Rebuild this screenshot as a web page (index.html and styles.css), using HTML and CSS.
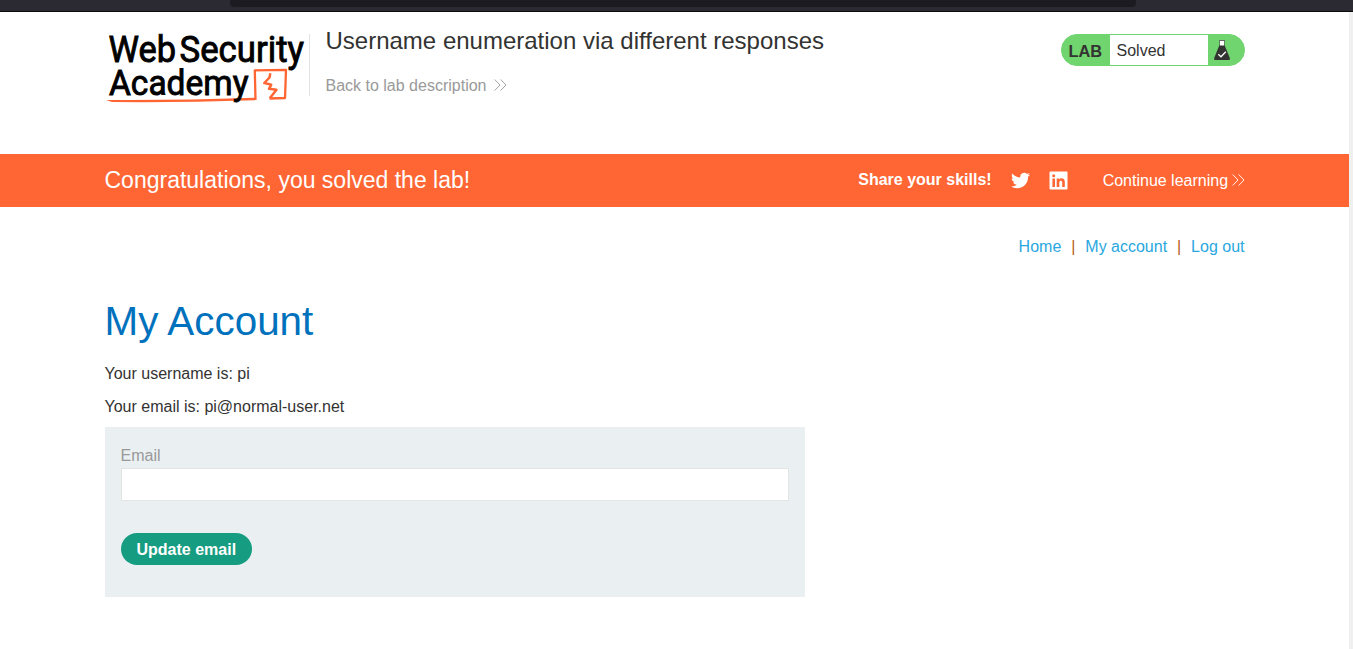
FILE: index.html
```html
<!DOCTYPE html>
<html lang="en">
<head>
<meta charset="utf-8">
<title>Username enumeration via different responses</title>
<link rel="stylesheet" href="styles.css">
</head>
<body>
<div class="browser-bar"><div class="address"></div></div>
<div class="viewport">
  <header class="lab-header">
    <div class="container header-row">
      <svg class="logo" width="200" height="76" viewBox="105 32 200 76" role="img" aria-label="Web Security Academy">
        <path d="M106 99.900 Q180 100.400 255 97.800 L255 100.200 Q180 102.700 112 102 Z" fill="#ff6633"/>
        <g fill="none" stroke="#ff6633" stroke-linejoin="round">
          <path d="M255.500 100 L254.800 70.300 L286 69.800 L285 98 L269.500 98.500" stroke-width="2.300"/>
          <path d="M270.300 73.300 L269.500 77.500 L264.300 83 L271.200 84.600 L269 88.800 L276.500 89.800 L269.800 98.300" stroke-width="2.500"/>
        </g>
        <g class="logo-text">
          <text x="108.500" y="62.4" font-size="37" textLength="67.500" lengthAdjust="spacingAndGlyphs">Web</text>
          <text x="179.500" y="62.4" font-size="37" textLength="124.500" lengthAdjust="spacingAndGlyphs">Security</text>
          <text x="109" y="95" font-size="35.5" textLength="139.500" lengthAdjust="spacingAndGlyphs">Academy</text>
        </g>
      </svg>
      <div class="title-block">
        <h2 class="lab-title">Username enumeration via different responses</h2>
        <a class="back-link">Back to lab description
          <svg class="chevrons" width="13" height="12" viewBox="0 0 13 12"><path d="M.7.5 6 6 .7 11.500M6.700.5 12 6 6.700 11.500"/></svg>
        </a>
      </div>
      <div class="lab-status">
        <span class="status-label">LAB</span>
        <span class="status-value">Solved</span>
        <svg class="flask" width="18" height="22" viewBox="0 0 18 22">
          <path d="M6 1.500H12" stroke="#666" stroke-width="1"/>
          <path d="M7 2H11V7H7Z" fill="#fff"/>
          <path d="M6.500 2V8M11.500 2V8" stroke="#4d6b4c" stroke-width=".7"/>
          <path d="M6.300 6.500H11.700L16.800 19Q17.400 21 16 21H2Q.6 21 1.200 19Z" fill="#333332"/>
          <path d="M5.300 15.200 8 17.800 12.800 12.800" fill="none" stroke="#fff" stroke-width="1.300"/>
        </svg>
      </div>
    </div>
  </header>
  <section class="banner">
    <div class="container banner-row">
      <h4 class="congrats">Congratulations, you solved the lab!</h4>
      <b class="share">Share your skills!</b>
      <svg class="twitter" width="19" height="19" viewBox="0 0 24 24"><path fill="#fff" d="M23.950 4.570a10 10 0 0 1-2.820.780 4.960 4.960 0 0 0 2.160-2.730c-.950.560-2 .960-3.120 1.180a4.920 4.920 0 0 0-8.380 4.480C7.690 8.100 4.070 6.130 1.640 3.160a4.820 4.820 0 0 0-.670 2.480c0 1.710.870 3.210 2.190 4.100a4.900 4.900 0 0 1-2.230-.620v.060a4.920 4.920 0 0 0 3.950 4.830 5 5 0 0 1-2.210.080 4.940 4.940 0 0 0 4.600 3.420A9.870 9.870 0 0 1 0 19.540a13.990 13.990 0 0 0 7.550 2.210c9.050 0 14-7.500 14-13.980 0-.210 0-.420-.020-.630a9.940 9.940 0 0 0 2.460-2.550z"/></svg>
      <svg class="linkedin" width="19" height="19" viewBox="0 0 19 19"><path fill="#fff" d="M1.500.5h16q1 0 1 1v16q0 1-1 1h-16q-1 0-1-1v-16q0-1 1-1z"/><circle cx="4.700" cy="4.800" r="1.500" fill="#f63"/><path fill="#f63" d="M3.400 7.500H6V16H3.400ZM7.700 7.500h2.500v1.200c1.200-2.200 5.600-2 5.600 2.200V16h-2.600v-4.500c0-2.500-2.900-2.300-2.900 0V16H7.700Z"/></svg>
      <a class="continue">Continue learning
        <svg class="chevrons" width="13" height="12" viewBox="0 0 13 12"><path d="M.7.5 6 6 .7 11.500M6.700.5 12 6 6.700 11.500"/></svg>
      </a>
    </div>
  </section>
  <main class="container">
    <nav class="top-links"><a>Home</a><i class="bar">|</i><a>My account</a><i class="bar">|</i><a>Log out</a></nav>
    <h1 class="page-title">My Account</h1>
    <p class="detail">Your username is: pi</p>
    <p class="detail">Your email is: pi@normal-user.net</p>
    <form class="email-form">
      <label class="field-label" for="email">Email</label>
      <input class="field" id="email" type="email">
      <button class="button" type="button">Update email</button>
    </form>
  </main>
</div>
</body>
</html>
```

FILE: styles.css
```css
* { box-sizing: border-box; }
body {
  margin: 0;
  height: 649px;
  overflow: hidden;
  background: #fff;
  color: #333332;
  font: 16px/20px "Liberation Sans", Arial, sans-serif;
}
h1, h2, h4, p { margin: 0; font-weight: 400; }
.browser-bar {
  height: 12px;
  background: #2b2a33;
  border-bottom: 1px solid #0c0c0d;
}
.address {
  width: 906px;
  height: 7px;
  margin-left: 230px;
  background: #1c1b22;
  border-radius: 0 0 4px 4px;
}
.viewport { height: 637px; border-right: 4px solid #f0f0f0; }
.container { width: 1140px; margin: 0 auto; }
.lab-header { height: 142px; }
.header-row { display: flex; align-items: flex-start; padding-top: 20px; }
.logo { flex: none; display: block; overflow: visible; }
.logo-text {
  font-family: Roboto, sans-serif;
  font-weight: 400;
  fill: #000;
  stroke: #000;
  stroke-width: .9;
}
.title-block {
  height: 62px;
  margin: 2px 0 0 4px;
  padding-left: 16px;
  border-left: 1px solid #e3e3e3;
}
.lab-title { font-size: 24px; line-height: 28px; margin-top: -7px; }
.back-link { display: block; margin-top: 21px; color: #999; }
.chevrons { margin-left: 3px; fill: none; stroke: currentColor; stroke-width: .9; }
.lab-status {
  display: flex;
  align-items: center;
  width: 184px;
  height: 32px;
  margin: 2px 0 0 auto;
  border: 1px solid #70d46f;
  border-radius: 16px;
  background: #70d46f;
}
.status-label { width: 48px; padding: 2px 0 0 7px; font-weight: 700; font-size: 16.400px; line-height: 32px; }
.status-value { width: 98px; height: 30px; padding-left: 7px; line-height: 32px; background: #fff; }
.flask { margin-left: 5px; }
.banner { height: 53px; background: #ff6633; color: #fff; }
.banner-row { display: flex; align-items: center; height: 53px; }
.congrats { font-size: 23px; line-height: 28px; margin: 0 auto 2px 0; }
.share { margin: 0 19px 2px 0; }
.twitter { margin-right: 19px; }
.linkedin { margin-right: 35px; }
.continue .chevrons { margin-left: -1px; }
.top-links { display: flex; justify-content: flex-end; margin-top: 30px; color: #29a7de; }
.bar { width: 24px; text-align: center; font-style: normal; color: #b85b16; }
.page-title { margin-top: 40px; font-size: 40.400px; line-height: 48px; color: #0071bc; }
.detail { margin-bottom: 13px; }
.page-title + .detail { margin-top: 19px; }
.email-form {
  width: 700px;
  height: 170px;
  margin-top: -3px;
  padding: 19px 16px;
  background: #eaf0f2;
}
.field-label { display: block; color: #999; }
.field {
  display: block;
  width: 668px;
  height: 33px;
  margin-top: 2px;
  border: 1px solid #e3e5e5;
  background: #fff;
}
.button {
  height: 32px;
  margin-top: 32px;
  padding: 1px 16px 0;
  border: 0;
  border-radius: 16px;
  background: #169c80;
  color: #fff;
  font: 700 16px/31px "Liberation Sans", Arial, sans-serif;
}
```
